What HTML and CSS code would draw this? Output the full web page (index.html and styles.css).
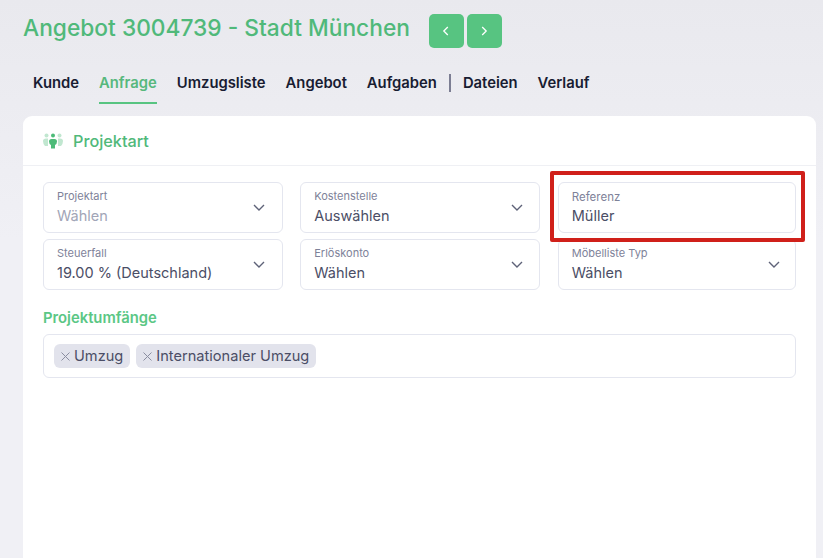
FILE: index.html
```html
<!DOCTYPE html>
<html>
<head>
<meta charset="utf-8">
<title>Angebot 3004739</title>
<link rel="stylesheet" href="styles.css">
</head>
<body>

<div class="head">
  <h1>Angebot 3004739 - Stadt München</h1>
  <div class="pager">
    <button type="button"><svg viewBox="0 0 12 12" width="12" height="12"><path d="M7.8 2 L3.8 6 L7.8 10"/></svg></button>
    <button type="button"><svg viewBox="0 0 12 12" width="12" height="12"><path d="M4.2 2 L8.2 6 L4.2 10"/></svg></button>
  </div>
</div>

<nav class="tabs">
  <a>Kunde</a>
  <a class="active">Anfrage</a>
  <a>Umzugsliste</a>
  <a>Angebot</a>
  <a>Aufgaben</a>
  <span class="sep"></span>
  <a>Dateien</a>
  <a>Verlauf</a>
</nav>

<section class="card">
  <div class="card-head">
    <svg class="people" viewBox="0 0 20 16" width="20" height="16">
      <circle class="dim" cx="3.5" cy="2.5" r="2"/>
      <circle class="dim" cx="16.5" cy="2.5" r="2"/>
      <path class="dim" d="M0 8 Q0 5.5 3 5.5 L5 5.5 L5 13 L2 13 Q0 11 0 8Z"/>
      <path class="dim" d="M20 8 Q20 5.5 17 5.5 L15 5.5 L15 13 L18 13 Q20 11 20 8Z"/>
      <circle cx="10" cy="2.5" r="2"/>
      <path d="M6 8.5 Q6 6 8.5 6 L11.5 6 Q14 6 14 8.5 Q14 11 12 12 L12 15.5 L8 15.5 L8 12 Q6 11 6 8.5Z"/>
    </svg>
    <h2>Projektart</h2>
  </div>
  <div class="card-body">
    <div class="fields">
      <div class="field">
        <label>Projektart</label>
        <div class="value muted">Wählen</div>
        <svg class="chev" viewBox="0 0 12 7" width="12" height="7"><path d="M1 1 L6 6 L11 1"/></svg>
      </div>
      <div class="field">
        <label>Kostenstelle</label>
        <div class="value">Auswählen</div>
        <svg class="chev" viewBox="0 0 12 7" width="12" height="7"><path d="M1 1 L6 6 L11 1"/></svg>
      </div>
      <div class="field">
        <label class="ref">Referenz</label>
        <div class="value">Müller</div>
        <div class="mark"></div>
      </div>
      <div class="field">
        <label>Steuerfall</label>
        <div class="value">19.00 % (Deutschland)</div>
        <svg class="chev" viewBox="0 0 12 7" width="12" height="7"><path d="M1 1 L6 6 L11 1"/></svg>
      </div>
      <div class="field">
        <label>Erlöskonto</label>
        <div class="value">Wählen</div>
        <svg class="chev" viewBox="0 0 12 7" width="12" height="7"><path d="M1 1 L6 6 L11 1"/></svg>
      </div>
      <div class="field">
        <label>Möbelliste Typ</label>
        <div class="value">Wählen</div>
        <svg class="chev" viewBox="0 0 12 7" width="12" height="7"><path d="M1 1 L6 6 L11 1"/></svg>
      </div>
    </div>

    <h3>Projektumfänge</h3>
    <div class="tagbox">
      <span class="tag"><svg viewBox="0 0 9 9" width="9" height="9"><path d="M.5 .5 L8.5 8.5 M8.5 .5 L.5 8.5"/></svg>Umzug</span>
      <span class="tag"><svg viewBox="0 0 9 9" width="9" height="9"><path d="M.5 .5 L8.5 8.5 M8.5 .5 L.5 8.5"/></svg>Internationaler Umzug</span>
    </div>
  </div>
</section>

</body>
</html>
```

FILE: styles.css
```css
html,body,h1,h2,h3{margin:0;padding:0;}
*{box-sizing:border-box;}
html,body{height:558px;overflow:hidden;}
body{
  font-family:Inter,"Liberation Sans",sans-serif;
  color:#181c32;
  background:#eeeef3;
  background:linear-gradient(#e9e9ee,#f0f0f5 240px);
  padding:14px 7px 0 23px;
}
.head{display:flex;align-items:center;height:34px;}
h1{font-size:22.75px;font-weight:500;color:#50b97a;line-height:30px;margin-top:-6px;}
.pager{display:flex;gap:3px;margin-left:19px;}
.pager button{
  width:35px;
  height:34px;
  padding:0;
  border:0;
  border-radius:5px;
  background:#57c481;
  display:flex;
  align-items:center;
  justify-content:center;
}
.pager path{fill:none;stroke:#fff;stroke-width:1.3;}

.tabs{display:flex;align-items:flex-start;gap:20px;margin:13px 0 0 10px;height:55px;}
.tabs a{
  font-size:14.8px;
  font-weight:600;
  line-height:20px;
  padding:12px 0 9px;
  border-bottom:2px solid transparent;
}
.tabs a.active{color:#57b87d;border-bottom-color:#57c481;}
.sep{width:2px;height:18px;background:#7c7e93;margin:13px -8px 0 -8px;}

.card{
  background:#fff;
  border-radius:9px 9px 0 0;
  height:442px;
}
.card-head{
  display:flex;
  align-items:center;
  gap:10px;
  height:50px;
  padding:0 0 0 20px;
  border-bottom:1px solid #eff0f4;
}
.people{fill:#4cbb78;}
.people .dim{opacity:.35;}
h2{font-size:16.25px;font-weight:500;color:#50b97a;margin-top:1px;}
.card-body{padding:16px 20px 0;}

.fields{
  display:grid;
  grid-template-columns:239.75px 240px 238px;
  column-gap:17.5px;
  row-gap:6px;
}
.field{
  position:relative;
  height:51px;
  border:1px solid #e4e6ef;
  border-radius:6px;
  padding:6px 13px 0;
}
.field label{display:block;font-size:11px;line-height:14px;color:#7e8299;}
.field label.ref{font-size:11.5px;margin:1px 0 -1px;}
.value{font-size:14.5px;line-height:20px;margin-top:3px;color:#4b4e66;}
.value.muted{color:#a1a5b7;}
.chev{position:absolute;right:17px;top:21px;}
.field:nth-child(3n+2) .chev{right:16px;}
.field:nth-child(3n) .chev{right:15px;}
.chev path{fill:none;stroke:#5e6278;stroke-width:1.4;}

/* red highlight over the Referenz field */
.mark{
  position:absolute;
  z-index:1;
  left:-9px;
  top:-12px;
  width:255px;
  height:71px;
  border:4px solid #d0201a;
  border-radius:2px;
}

h3{font-size:14.8px;font-weight:600;color:#5bc785;line-height:20px;margin:18px 0 6px;}
.tagbox{
  display:flex;
  gap:6px;
  align-items:center;
  height:44px;
  border:1px solid #e4e6ef;
  border-radius:6px;
  padding:0 10px;
}
.tag{
  display:flex;
  align-items:center;
  gap:4px;
  height:24px;
  padding:0 7px;
  border-radius:6px;
  background:#e2e3ec;
  color:#4b4e66;
  font-size:14.6px;
}
.tag path{fill:none;stroke:#8a8da0;stroke-width:1;}
```
